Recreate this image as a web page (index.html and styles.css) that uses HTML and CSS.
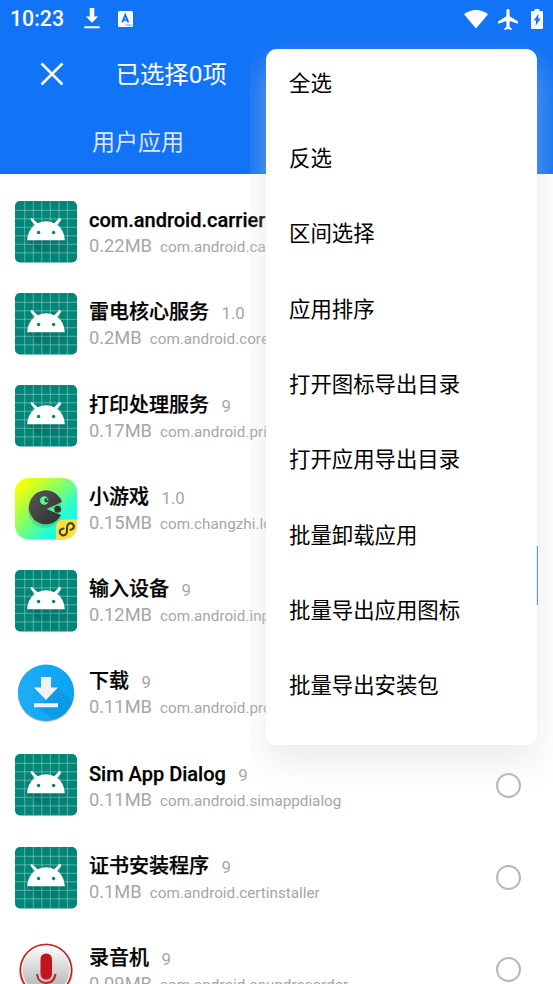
FILE: index.html
```html
<!DOCTYPE html>
<html lang="zh-CN">
<head>
<meta charset="utf-8">
<title>应用列表</title>
<link rel="stylesheet" href="styles.css">
</head>
<body>
<svg class="defs" aria-hidden="true">
  <defs>
    <linearGradient id="long" x1="0" y1="0" x2=".8" y2="1"><stop offset="0" stop-color="#000" stop-opacity=".16"/><stop offset=".8" stop-color="#000" stop-opacity="0"/></linearGradient>
    <linearGradient id="lime" x1="0" y1="0" x2="1" y2="1"><stop offset="0" stop-color="#ff0"/><stop offset=".12" stop-color="#eeff0b"/><stop offset=".42" stop-color="#8aff62"/><stop offset=".72" stop-color="#1ffcdd"/><stop offset="1" stop-color="#00f6ff"/></linearGradient>
    <linearGradient id="coal" x1="0" y1="0" x2="1" y2="1"><stop offset="0" stop-color="#5a5a5a"/><stop offset="1" stop-color="#2c2c2c"/></linearGradient>
    <linearGradient id="sky" x1="0" y1="0" x2="1" y2="0"><stop offset="0" stop-color="#21acf5"/><stop offset="1" stop-color="#08a4f2"/></linearGradient>
    <linearGradient id="silver" x1="0" y1="0" x2="0" y2="1"><stop offset="0" stop-color="#fff"/><stop offset="1" stop-color="#aaa"/></linearGradient>
    <clipPath id="tile"><rect width="62" height="61.500" rx="14"/></clipPath>
  </defs>
  <symbol id="android" viewBox="0 0 62 62">
    <rect width="62" height="61.500" rx="5" fill="#018577"/>
    <path d="M9.700 0V61.500M18.300 0V61.500M26.800 0V61.500M35.300 0V61.500M44 0V61.500M52.400 0V61.500M0 9.300H62M0 17.800H62M0 26.300H62M0 34.800H62M0 43.300H62M0 51.900H62" stroke="#8cc9c2" stroke-width=".8" stroke-opacity=".8"/>
    <path d="M12.500 39.200H49.800L56 46V61.500H35Z" fill="url(#long)"/>
    <path d="M12.200 39.200C12.600 32 15.700 26.800 19.800 23.900L15.700 18.900Q15.300 17.300 17 17L22.700 22.200Q31 18.200 39.300 22.200L44.300 17Q46.200 17 46.200 18.900L42.200 23.900C46.500 26.800 49.400 32 49.800 39.200Z" fill="#fff"/>
    <circle cx="23.600" cy="31.500" r="1.700" fill="#018577"/><circle cx="38.600" cy="31.500" r="1.700" fill="#018577"/>
  </symbol>
</svg>

<header class="top">
  <div class="status">
    <span class="clock">10:23</span>
    <svg class="st-down" viewBox="0 0 16 22"><path d="M5.700 0H10.300V8.500H14.200L8 14.700L1.800 8.500H5.700ZM.3 18.200H15.700V20.300H.3Z" fill="#fff"/></svg>
    <svg class="st-app" viewBox="0 0 15 16"><rect width="15" height="16" rx="1.500" fill="#fff"/><path d="M4.300 11.300L7.300 4L10.300 11.300M5.500 8.900H9.100" fill="none" stroke="#1173f6" stroke-width="1.900"/><path d="M8 14H9.500M10.300 14H11.800M12.600 14H13.600" stroke="#1173f6" stroke-width="1"/></svg>
    <svg class="st-wifi" viewBox="0 0 24 19"><path d="M0 4.200Q12-4.200 24 4.200L12 18.600Z" fill="#fff"/></svg>
    <svg class="st-plane" viewBox="2 2 19 20"><path d="M21 16v-2l-8-5V3.500c0-.83-.67-1.500-1.500-1.500S10 2.670 10 3.500V9l-8 5v2l8-2.500V19l-2 1.500V22l3.500-1 3.500 1v-1.500L13 19v-5.500z" fill="#fff"/></svg>
    <svg class="st-batt" viewBox="0 0 12 20"><path d="M1.200 2H3.600V0H8.400V2H10.800Q12 2 12 3.200V18.800Q12 20 10.800 20H1.200Q0 20 0 18.800V3.200Q0 2 1.200 2Z" fill="#fff"/><path d="M7.600 4.800L2.600 11.600H5.100L4.600 17L9.500 9.600H7.100Z" fill="#1173f6"/></svg>
  </div>
  <div class="bar">
    <svg class="close" viewBox="0 0 24 24"><path d="M1.500 1.500L22.500 22.500M22.500 1.500L1.500 22.500" stroke="#fff" stroke-width="2.500"/></svg>
    <h1 class="title">已选择0项</h1>
  </div>
  <nav class="tabs"><span class="tab">用户应用</span></nav>
</header>

<main class="list">
  <article class="row"><svg class="icon"><use href="#android"/></svg><div class="info"><p class="line"><b class="name">com.android.carrier</b></p><p class="line sub"><span class="size">0.22MB</span><span class="pkg">com.android.ca</span></p></div><i class="radio"></i></article>
  <article class="row"><svg class="icon"><use href="#android"/></svg><div class="info"><p class="line"><b class="name">雷电核心服务</b><span class="ver">1.0</span></p><p class="line sub"><span class="size">0.2MB</span><span class="pkg">com.android.core</span></p></div><i class="radio"></i></article>
  <article class="row"><svg class="icon"><use href="#android"/></svg><div class="info"><p class="line"><b class="name">打印处理服务</b><span class="ver">9</span></p><p class="line sub"><span class="size">0.17MB</span><span class="pkg">com.android.prin</span></p></div><i class="radio"></i></article>
  <article class="row">
    <svg class="icon" viewBox="0 0 62 62">
      <g clip-path="url(#tile)"><rect width="62" height="62" fill="url(#lime)"/>
      <path d="M47 24.500A17 17 0 1 0 46 37.500L31.500 31Z" fill="#063" opacity=".18" transform="translate(-1 3)"/>
      <path d="M47 24A17 17 0 1 0 46 37L31.500 31Z" fill="url(#coal)"/>
      <circle cx="29.300" cy="22.500" r="4.300" fill="#55ff95"/><circle cx="31.600" cy="22.300" r="2.300" fill="#444"/><circle cx="32.500" cy="21.600" r=".8" fill="#55ff95"/>
      <circle cx="42.700" cy="31.200" r="3.500" fill="#363636"/>
      <path d="M41 62V49Q41 41.500 49 41.500H62V62Z" fill="#ffdf3b"/>
      <path d="M48.500 50.500C44.500 51 43.500 54 46 56.500C48.500 58.500 52 57 52 53.500V49.500C52 45.500 55.500 44 57.800 46C60 48.500 58.500 51.500 55.500 51.700" fill="none" stroke="#45402b" stroke-width="2.100" stroke-linecap="round"/></g>
    </svg>
    <div class="info"><p class="line"><b class="name">小游戏</b><span class="ver">1.0</span></p><p class="line sub"><span class="size">0.15MB</span><span class="pkg">com.changzhi.ld</span></p></div><i class="radio"></i></article>
  <article class="row"><svg class="icon"><use href="#android"/></svg><div class="info"><p class="line"><b class="name">输入设备</b><span class="ver">9</span></p><p class="line sub"><span class="size">0.12MB</span><span class="pkg">com.android.inp</span></p></div><i class="radio"></i></article>
  <article class="row">
    <svg class="icon" viewBox="0 0 62 62">
      <circle cx="31" cy="31.700" r="28.200" fill="#999" opacity=".75"/><circle cx="31" cy="30.800" r="28.200" fill="url(#sky)"/>
      <path d="M43 25.500L57 39Q52 53 38 57L19 44L31 38Z" fill="#037" opacity=".1"/>
      <path d="M26 15H36V25.500H43L31 38L19 25.500H26ZM19 41.300H43V45.300H19Z" fill="#f2f2f2"/>
    </svg>
    <div class="info"><p class="line"><b class="name">下载</b><span class="ver">9</span></p><p class="line sub"><span class="size">0.11MB</span><span class="pkg">com.android.pro</span></p></div><i class="radio"></i></article>
  <article class="row"><svg class="icon"><use href="#android"/></svg><div class="info"><p class="line"><b class="name">Sim App Dialog</b><span class="ver">9</span></p><p class="line sub"><span class="size">0.11MB</span><span class="pkg">com.android.simappdialog</span></p></div><i class="radio"></i></article>
  <article class="row"><svg class="icon"><use href="#android"/></svg><div class="info"><p class="line"><b class="name">证书安装程序</b><span class="ver">9</span></p><p class="line sub"><span class="size">0.1MB</span><span class="pkg">com.android.certinstaller</span></p></div><i class="radio"></i></article>
  <article class="row">
    <svg class="icon" viewBox="0 0 62 62">
      <circle cx="31" cy="31.500" r="27" fill="#777" opacity=".55"/><circle cx="31" cy="31" r="25.500" fill="url(#silver)" stroke="#d01b1b" stroke-width="1.600"/>
      <circle cx="31" cy="31" r="24" fill="none" stroke="#fff" stroke-width="1.200" opacity=".8"/>
      <rect x="25.500" y="14.500" width="11.500" height="26" rx="5.500" fill="#c3161c"/><path d="M22 35Q23 44 31 44T40.500 35" fill="none" stroke="#b92428" stroke-width="2"/>
    </svg>
    <div class="info"><p class="line"><b class="name">录音机</b><span class="ver">9</span></p><p class="line sub"><span class="size">0.09MB</span><span class="pkg">com.android.soundrecorder</span></p></div><i class="radio"></i></article>
</main>

<div class="popup">
  <ul class="menu">
    <li>全选</li><li>反选</li><li>区间选择</li><li>应用排序</li><li>打开图标导出目录</li><li>打开应用导出目录</li><li>批量卸载应用</li><li>批量导出应用图标</li><li>批量导出安装包</li>
  </ul>
</div>
<i class="thumb"></i>
</body>
</html>
```

FILE: styles.css
```css
* { box-sizing: border-box; margin: 0; padding: 0; }
html, body { width: 553px; height: 984px; overflow: hidden; }
body { position: relative; background: #fff; font-family: Roboto, "Noto Sans CJK SC", sans-serif; color: #000; }
.defs { position: absolute; width: 0; height: 0; }

.top { height: 174px; background: #1173f6; color: #fff; }
.status { display: flex; align-items: center; height: 38px; padding: 0 9px 0 10px; }
.clock { width: 74px; font-size: 21.300px; font-weight: 500; line-height: 38px; }
.st-down { width: 16px; height: 22px; }
.st-app { width: 15px; height: 16px; margin-left: 18px; }
.st-wifi { width: 24px; height: 19px; margin-left: auto; }
.st-plane { width: 20px; height: 21px; margin-left: 10px; }
.st-batt { width: 12px; height: 20px; margin: 0 1px 0 13px; }
.bar { display: flex; align-items: center; height: 72px; padding-left: 40px; }
.close { width: 24px; height: 24px; }
.title { margin-left: 51.500px; padding-top: 2px; font-size: 24.400px; font-weight: 400; line-height: 36px; }
.tabs { display: flex; width: 276px; height: 64px; justify-content: center; align-items: center; }
.tab { padding-top: 2px; font-size: 23px; line-height: 34px; color: #dfe3ea; }

.list { padding-top: 11.700px; }
.row { display: flex; align-items: center; height: 92.250px; padding: 0 32px 0 15px; }
.icon { flex: none; width: 62px; height: 62px; }
.info { flex: 1; min-width: 0; margin-left: 12px; padding-top: 2.600px; }
.line { display: flex; align-items: baseline; height: 26px; line-height: 26px; white-space: nowrap; }
.name { font-size: 20px; font-weight: 500; -webkit-text-stroke: .25px #000; }
.ver { margin-left: 12.500px; font-size: 16.800px; color: #a6a6a6; }
.size { font-size: 18.300px; color: #a6a6a6; }
.pkg { margin-left: 8px; font-size: 15.250px; color: #a6a6a6; }
.radio { flex: none; width: 25px; height: 25px; border: 2px solid #b8b8b8; border-radius: 50%; }

.popup { position: absolute; left: 250px; top: 30px; width: 303px; height: 770px; padding: 19px 16px; overflow: hidden; }
.menu { height: 696px; padding-top: .6px; border-radius: 11px; background: #fff; box-shadow: 0 17px 34px rgba(214, 214, 214, .48); list-style: none; }
.menu li { height: 75.330px; padding-left: 23px; font-size: 21.400px; line-height: 68px; color: #000; }
.thumb { position: absolute; left: 536px; top: 546px; width: 2px; height: 59px; border-left: 1px solid #e3eefc; background: #6098e4; }
```
